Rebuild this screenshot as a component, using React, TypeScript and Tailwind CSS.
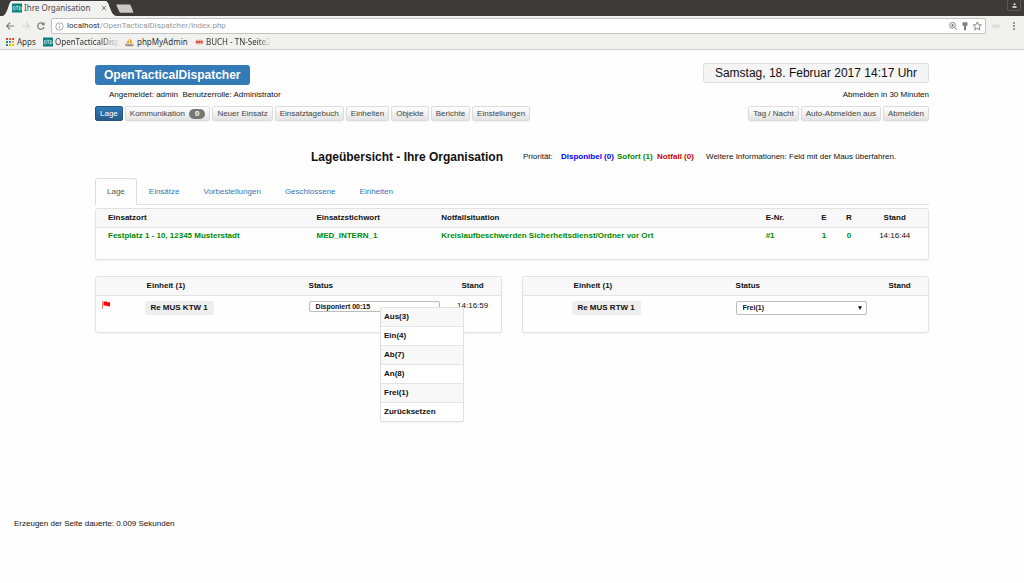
const chromeTitle = "Ihre Organisation";

const navLeft = [
  "Neuer Einsatz",
  "Einsatztagebuch",
  "Einheiten",
  "Objekte",
  "Berichte",
  "Einstellungen",
];

const navRight = ["Tag / Nacht", "Auto-Abmelden aus", "Abmelden"];

const tabs = ["Einsätze", "Vorbestellungen", "Geschlossene", "Einheiten"];

const statusMenu = ["Aus(3)", "Ein(4)", "Ab(7)", "An(8)", "Frei(1)", "Zurücksetzen"];

const appColors = [
  "#db4437", "#e0604c", "#db4437",
  "#0f9d58", "#4285f4", "#f4b400",
  "#0f9d58", "#f4b400", "#f4b400",
];

const navButton =
  "h-[15px] rounded-[2px] border border-[#dcdcdc] bg-gradient-to-b from-white to-[#e3e3e3] px-1 text-[8px] leading-[13px] whitespace-nowrap text-[#444] shadow-xs";

function OtdIcon() {
  return (
    <svg viewBox="0 0 10 10" className="size-[10px] shrink-0">
      <rect y=".5" width="10" height="9" fill="#0c8080" />
      <ellipse cx="2.2" cy="5.200" rx="1.1" ry="1.9" fill="none" stroke="#d6eded" strokeWidth="0.8" />
      <path d="M4 3.300h2.400M5.200 3.300v3.800M7.300 3.300v3.800c2.400 0 2.400-3.800 0-3.800z" fill="none" stroke="#d6eded" strokeWidth="0.8" />
    </svg>
  );
}

function BrowserBar() {
  return (
    <header className="bg-[#f1f1f0] font-['Noto_Sans',sans-serif] text-[#4a4a4a]">
      <div className="flex h-4 items-end bg-[#3c3b37]">
        <div className="relative flex h-4 w-[116px] items-center pl-3">
          <svg viewBox="0 0 116 16" className="absolute inset-0 h-4 w-[116px]">
            <path d="M3 16C5 15 6 13 8 8 10 2 10 1 13 1h92c3 0 3 2 5 7 2 5 3 7 6 8z" fill="#f1f1f0" />
          </svg>
          <div className="relative flex items-center gap-[2px]">
            <OtdIcon />
            <span className="w-[75px] text-[8px] leading-4 whitespace-nowrap">{chromeTitle}</span>
            <svg viewBox="0 0 6 6" className="size-[6px]">
              <path d="M.8.8l4.400 4.400M5.200.8L.8 5.200" stroke="#777" strokeWidth="1" />
            </svg>
          </div>
        </div>
        <svg viewBox="0 0 18 16" className="h-4 w-[18px]">
          <path d="M1 4.500h12c1 0 1.400.4 1.700 1l2.500 6.200c.2.600 0 1-.7 1H5c-1 0-1.300-.3-1.600-1L.5 5.500c-.2-.7-.1-1 .5-1z" fill="#cbcac7" />
        </svg>
        <div className="mr-[3px] mb-[5px] ml-auto flex h-[11px] w-[14px] items-center justify-center rounded-b-[2px] border border-t-0 border-[#5a5954]">
          <svg viewBox="0 0 6 6" className="size-[5px]">
            <circle cx="3" cy="1.500" r="1.300" fill="#e2e2e0" />
            <path d="M.5 5.800V3.800h5v2z" fill="#e2e2e0" />
          </svg>
        </div>
      </div>
      <div className="flex h-5 items-center pl-[5px]">
        <svg viewBox="0 0 46 20" className="h-5 w-[46px]" fill="none">
          <path d="M9 10H2M5 6.700L1.700 10 5 13.300" stroke="#777" strokeWidth="1.100" />
          <path d="M17 10h7M21 6.700l3.300 3.300-3.300 3.300" stroke="#d6d6d6" strokeWidth="1.100" />
          <path d="M38.300 8A3.200 3.200 0 1 0 39 11" stroke="#777" strokeWidth="1.200" />
          <path d="M39.600 6v3.200h-3.200z" fill="#777" />
        </svg>
        <div className="flex h-4 flex-1 items-center rounded-[2px] border border-[#c2c2c2] bg-white pl-[3px]">
          <svg viewBox="0 0 9 9" className="size-[9px]" fill="none" stroke="#858585" strokeWidth="0.7">
            <circle cx="4.500" cy="4.500" r="3.700" />
            <path d="M4.500 4v2.600M4.500 2.300v.8" />
          </svg>
          <span className="ml-[3px] flex-1 font-[Roboto,sans-serif] text-[8px] leading-[14px] text-[#999]">
            <span className="text-[#2f2f2f]">localhost</span>/OpenTacticalDispatcher/index.php
          </span>
          <svg viewBox="0 0 37 14" className="h-[14px] w-[37px]" fill="none" stroke="#777" strokeWidth="0.9">
            <circle cx="4.500" cy="6.300" r="2.800" />
            <path d="M6.600 8.400l2.400 2.400M3.100 6.300h2.800M4.500 4.900v2.800" />
            <path d="M14.500 3.300h5v3l-1.500.9v4h-2v-4l-1.500-.9z" fill="#808080" stroke="none" />
            <path d="M29.300 3l1.200 2.700 2.900.3-2.200 2 .6 2.900-2.500-1.500-2.500 1.500.6-2.900-2.200-2 2.900-.3z" />
          </svg>
        </div>
        <svg viewBox="0 0 38 20" className="h-5 w-[38px]">
          <ellipse cx="10" cy="10" rx="4.500" ry="2.600" fill="#e6e6e5" />
          <path d="M6.500 10h7" stroke="#cdcdcc" strokeWidth="1.500" strokeDasharray="1.500 .6" />
          <circle cx="28" cy="7" r=".9" fill="#6b6b6b" />
          <circle cx="28" cy="10" r=".9" fill="#6b6b6b" />
          <circle cx="28" cy="13" r=".9" fill="#6b6b6b" />
        </svg>
      </div>
      <nav className="flex h-[14px] items-start border-b border-[#cfcfd1] pl-[6px] text-[8px] leading-3 whitespace-nowrap text-[#333]">
        <a href="#apps" className="flex w-[37px] items-center gap-[3px]">
          <svg viewBox="0 0 8 8" className="size-2 shrink-0">
            {appColors.map((color, i) => (
              <rect key={i} x={(i % 3) * 3} y={Math.floor(i / 3) * 3} width="2" height="2" fill={color} />
            ))}
          </svg>
          Apps
        </a>
        <a href="#otd" className="flex w-[82px] items-center gap-[2px]">
          <OtdIcon />
          <span className="mask-r-from-70%">OpenTacticalDisp</span>
        </a>
        <a href="#phpmyadmin" className="flex w-[70px] items-center gap-[3px]">
          <svg viewBox="0 0 10 10" className="size-[9px] shrink-0">
            <path d="M4.500.5c2.300 1 3.500 3 3.500 5.500H5.500c.3-2-.3-3.800-1-5.500zM3.500 1.500C4.600 3.500 4.600 4.800 4.300 6H1c1.200-1 2.200-2.500 2.500-4.500z" fill="#f6a02c" />
            <path d="M0 6.300h10L9 9.500H1z" fill="#e3c08a" />
            <path d="M.8 8h8.400" stroke="#7b7ba0" strokeWidth="1.600" strokeDasharray="2 .6" />
          </svg>
          phpMyAdmin
        </a>
        <a href="#buch" className="flex items-center gap-[2px]">
          <svg viewBox="0 0 9 8" className="h-2 w-[9px] shrink-0">
            <ellipse cx="4.500" cy="4" rx="4.400" ry="2.800" fill="#f6c9c3" />
            <path d="M1 4h7" stroke="#e2402f" strokeWidth="2.400" strokeDasharray="1.800 .5" />
          </svg>
          <span className="mask-r-from-80%">BUCH - TN-Seite2</span>
        </a>
      </nav>
    </header>
  );
}

type UnitPanelProps = {
  unit: string;
  status: string;
  stand?: string;
  flagged?: boolean;
  open?: boolean;
};

function UnitPanel({ unit, status, stand, flagged, open }: UnitPanelProps) {
  return (
    <section className="relative h-[57px] rounded-[3px] border border-[#e2e2e2] shadow-xs">
      <table className="w-full table-fixed text-left text-[8px]">
        <colgroup>
          <col className="w-[12%]" />
          <col className="w-[40%]" />
          <col className="w-[34%]" />
          <col className="w-[14%]" />
        </colgroup>
        <thead>
          <tr className="h-[18px] border-b border-[#e4e4e4] bg-[#f8f8f8]">
            <th />
            <th className="pl-[2px]">Einheit (1)</th>
            <th className="pl-[2px]">Status</th>
            <th className="text-center">Stand</th>
          </tr>
        </thead>
        <tbody>
          <tr className="align-top">
            <td className="pt-[5px] pl-[6px]">
              {flagged && (
                <svg viewBox="0 0 8 8" className="size-2" role="img" aria-label="Markiert">
                  <path d="M.5 0v8" stroke="#ff8080" strokeWidth="1" />
                  <path d="M1.500.6h3l.7.700H8v4H5l-.7-.8H1.500z" fill="#f00" />
                </svg>
              )}
            </td>
            <td className="pt-[5px]">
              <span className="block w-[69px] rounded-[2px] bg-[#eee] text-center leading-[14px] font-bold">
                {unit}
              </span>
            </td>
            <td className="pt-[5px] pl-[2px]">
              {open ? (
                <button
                  type="button"
                  aria-haspopup="menu"
                  aria-expanded="true"
                  className="block h-[11px] w-[131px] rounded-[2px] border border-[#bbb] pl-[6px] text-left text-[7px] leading-[9px] font-bold"
                >
                  {status}
                </button>
              ) : (
                <span className="flex w-[131px] items-center">
                  <select
                    aria-label="Status"
                    className="h-[14px] w-full appearance-none rounded-[2px] border border-[#bbb] bg-white pl-[6px] text-[7px] leading-3 font-bold"
                  >
                    <option>{status}</option>
                  </select>
                  <svg viewBox="0 0 4 4" className="pointer-events-none -ml-[9px] size-1 shrink-0">
                    <path d="M0 .3h4L2 4z" fill="#111" />
                  </svg>
                </span>
              )}
            </td>
            <td className="pt-[4px] text-center leading-3">{stand}</td>
          </tr>
        </tbody>
      </table>
      {open && (
        <ul
          role="menu"
          className="absolute top-[30px] right-[37px] w-[84px] rounded-[2px] border border-[#e0e0e0] bg-white text-[8px] font-bold shadow-xs"
        >
          {statusMenu.map((item) => (
            <li key={item} role="none" className="border-b border-[#e4e4e4] last:border-b-0 odd:bg-[#f8f8f8]">
              <button type="button" role="menuitem" className="block h-[18px] w-full pl-[3px] text-left leading-[18px]">
                {item}
              </button>
            </li>
          ))}
        </ul>
      )}
    </section>
  );
}

export default function App() {
  return (
    <div className="min-h-screen bg-[#fefefe] font-['Liberation_Sans',Arial,sans-serif] text-[8px] text-[#111]">
      <BrowserBar />

      <main className="mx-auto w-[calc(100%-190px)] pt-[13px]">
        <div className="flex items-start justify-between">
          <h1 className="mt-[2px] rounded-[3px] bg-[#337ab7] px-[9px] text-[12px] leading-5 font-bold text-white">
            OpenTacticalDispatcher
          </h1>
          <p className="rounded-[3px] border border-[#ddd] bg-[#f5f5f5] px-[11px] text-[12px] leading-[18px]">
            Samstag, 18. Februar 2017 14:17 Uhr
          </p>
        </div>
        <div className="mt-[4px] flex justify-between pl-[14px] leading-3">
          <p>
            Angemeldet: admin&nbsp; Benutzerrolle: Administrator
          </p>
          <p>Abmelden in 30 Minuten</p>
        </div>

        <nav className="mt-[5px] flex gap-[2px]">
          <button
            type="button"
            className="h-[15px] rounded-[2px] border border-[#245580] bg-gradient-to-b from-[#337ab7] to-[#265a88] px-1 text-[8px] leading-[13px] text-white"
          >
            Lage
          </button>
          <button type="button" className={navButton}>
            Kommunikation
            <span className="ml-1 inline-block h-[10px] rounded-full bg-[#777] px-[6px] text-[8px] leading-[10px] font-bold text-white">
              0
            </span>
          </button>
          {navLeft.map((label) => (
            <button key={label} type="button" className={navButton}>
              {label}
            </button>
          ))}
          <span className="flex-1" />
          {navRight.map((label) => (
            <button key={label} type="button" className={navButton}>
              {label}
            </button>
          ))}
        </nav>

        <div className="mt-[26px] flex items-center justify-end pr-[27px] leading-5 whitespace-nowrap">
          <h2 className="mr-5 text-[12px] font-bold">Lageübersicht - Ihre Organisation</h2>
          <span className="w-[38px]">Priorität:</span>
          <span className="w-[56px] font-bold text-[#00f]">Disponibel (0)</span>
          <span className="w-[40px] font-bold text-[#008a00]">Sofort (1)</span>
          <span className="w-[49px] font-bold text-[#c00]">Notfall (0)</span>
          <span className="w-[196px]">Weitere Informationen: Feld mit der Maus überfahren.</span>
        </div>

        <div role="tablist" className="mt-[11px] flex h-[27px] border-b border-[#e2e2e2]">
          <button
            type="button"
            role="tab"
            aria-selected="true"
            className="h-[27px] rounded-t-[3px] border border-b-0 border-[#ddd] bg-[#fefefe] px-[11px] text-[#555]"
          >
            Lage
          </button>
          {tabs.map((label) => (
            <button
              key={label}
              type="button"
              role="tab"
              aria-selected="false"
              className="h-[27px] px-3 pt-px text-[#337ab7]"
            >
              {label}
            </button>
          ))}
        </div>

        <section className="mt-[3px] h-[52px] rounded-[3px] border border-[#e2e2e2] shadow-xs">
          <table className="w-full table-fixed text-left">
            <colgroup>
              <col className="w-[26.500%]" />
              <col className="w-[15%]" />
              <col />
              <col className="w-[6%]" />
              <col className="w-[3%]" />
              <col className="w-[3%]" />
              <col className="w-[8%]" />
            </colgroup>
            <thead>
              <tr className="h-[18px] border-b border-[#e4e4e4] bg-[#f8f8f8]">
                <th className="pl-3">Einsatzort</th>
                <th>Einsatzstichwort</th>
                <th>Notfallsituation</th>
                <th className="pl-1">E-Nr.</th>
                <th className="text-center">E</th>
                <th className="text-center">R</th>
                <th className="text-center">Stand</th>
              </tr>
            </thead>
            <tbody>
              <tr className="h-[18px] font-bold text-[#008a00]">
                <td className="pl-3">Festplatz 1 - 10, 12345 Musterstadt</td>
                <td>MED_INTERN_1</td>
                <td>Kreislaufbeschwerden Sicherheitsdienst/Ordner vor Ort</td>
                <td className="pl-1">#1</td>
                <td className="text-center">1</td>
                <td className="text-center">0</td>
                <td className="text-center font-normal text-[#111]">14:16:44</td>
              </tr>
            </tbody>
          </table>
        </section>

        <div className="mt-4 grid grid-cols-2 gap-5">
          <UnitPanel unit="Re MUS KTW 1" status="Disponiert 00:15" stand="14:16:59" flagged open />
          <UnitPanel unit="Re MUS RTW 1" status="Frei(1)" />
        </div>
      </main>

      <footer className="mt-[185px] pb-4 pl-[14px] leading-3">Erzeugen der Seite dauerte: 0.009 Sekunden</footer>
    </div>
  );
}
